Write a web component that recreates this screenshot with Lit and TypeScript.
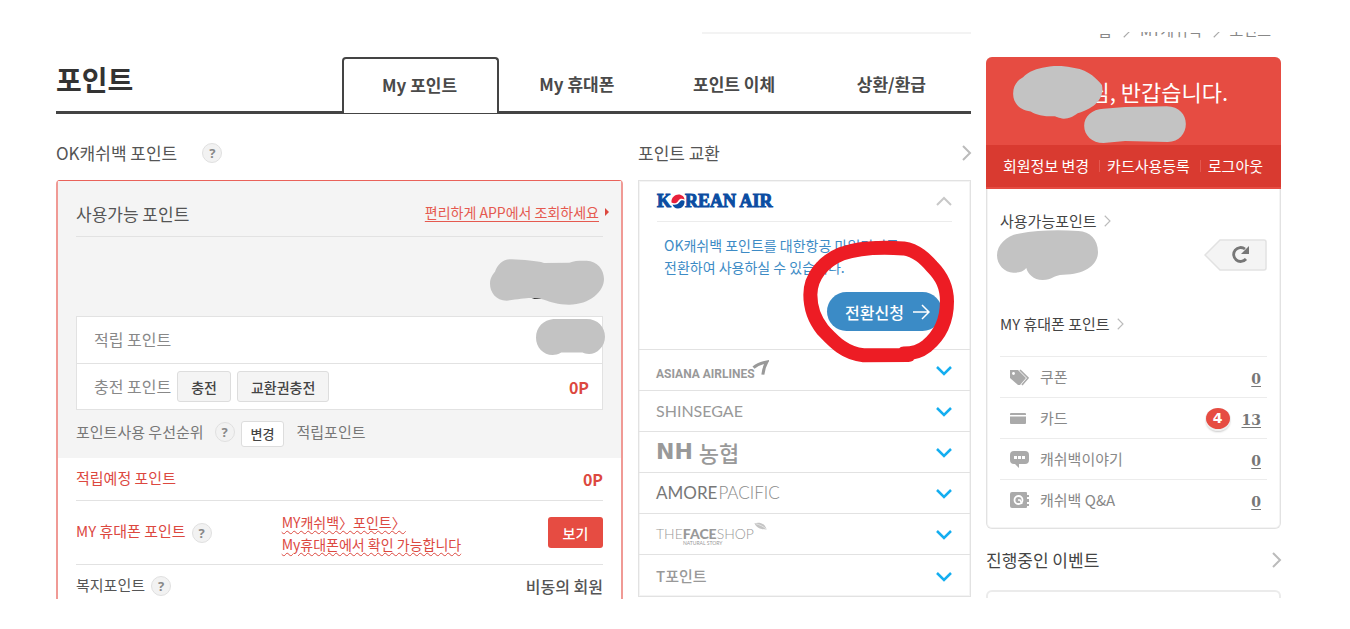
import { LitElement, html, css, svg, nothing } from "lit";
import { customElement } from "lit/decorators.js";

const chevron = (dir: string, size: number, color: string, weight: number) => {
  const d: Record<string, string> = {
    right: "M5 1 L12 8 L5 15",
    up: "M1 12 L8 5 L15 12",
    down: "M1 5 L8 12 L15 5",
  };
  return html`<svg width=${size} height=${size} viewBox="0 0 16 16" fill="none" stroke=${color} stroke-width=${weight} aria-hidden="true"><path d=${d[dir]} /></svg>`;
};

const help = () => html`<button class="help" type="button" aria-label="도움말">?</button>`;

const logos = {
  asiana: html`<span class="asiana">ASIANA AIRLINES</span><svg class="wing" width="17" height="16" viewBox="0 0 50 48" aria-hidden="true"><path d="M4 23 C14 14 26 9 44 6 C38 16 34 28 32 44" fill="none" stroke="#999" stroke-width="9" /></svg>`,
  shinsegae: html`<span class="shinsegae">SHINSEGAE</span>`,
  nh: html`<span class="nh">NH</span><span class="nh-kr">농협</span>`,
  amore: html`<span class="amore"><b>AMORE</b>PACIFIC</span>`,
  face: html`<span class="face">THE<b>FACE</b>SHOP<small>NATURAL STORY</small></span><svg class="leaf" width="13" height="9" viewBox="0 0 36 24" aria-hidden="true"><path d="M1 3 C12 0 28 0 35 20 C20 20 8 18 1 3Z" fill="#c4c4c4" /><path d="M4 4 C16 7 26 12 34 19" stroke="#eee" fill="none" stroke-width="2" /></svg>`,
  tpoint: html`<span class="tpoint">T포인트</span>`,
};

const menuIcons = {
  coupon: svg`<path d="M0 1 H8 L16 9 L10 16 H8 L0 9Z" fill="#aaa"/><circle cx="3.5" cy="4.5" r="1.4" fill="#fff"/><path d="M10 1 L18 9 L12 16" fill="none" stroke="#aaa" stroke-width="1.6"/>`,
  card: svg`<path d="M0 4 Q0 3 1 3 H15 Q16 3 16 4 V5 H0Z M0 6.5 H16 V13 Q16 14 15 14 H1 Q0 14 0 13Z" fill="#aaa"/>`,
  talk: svg`<path d="M4 0 H15 Q19 0 19 4 V9 Q19 13 15 13 H9 V17 L5 13 H4 Q0 13 0 9 V4 Q0 0 4 0Z" fill="#aaa"/><path d="M4 5h3v3H4z M8 5h3v3H8z M12 5h3v3h-3z" fill="#fff"/>`,
  qna: svg`<path d="M2 0 H16 Q17 0 17 1 V3 H19 V5 H17 V7 H19 V10 H17 V12 H19 V14 H17 V15 Q17 16 16 16 H2 Q0 16 0 14 V2 Q0 0 2 0Z" fill="#aaa"/><circle cx="8.500" cy="8" r="4" fill="none" stroke="#fff" stroke-width="1.800"/><path d="M8 8 H10 L12 12" fill="none" stroke="#fff" stroke-width="1.500"/>`,
};

const partners = ["asiana", "shinsegae", "nh", "amore", "face", "tpoint"] as const;

const menu = [
  { icon: "coupon", label: "쿠폰", count: 0, fresh: 0 },
  { icon: "card", label: "카드", count: 13, fresh: 4 },
  { icon: "talk", label: "캐쉬백이야기", count: 0, fresh: 0 },
  { icon: "qna", label: "캐쉬백 Q&A", count: 0, fresh: 0 },
] as const;

@customElement("app-root")
export class AppRoot extends LitElement {
  static styles = css`
    :host {
      display: block;
      background: #fff;
      color: #555;
      font-family: "Noto Sans CJK KR", "Noto Sans", sans-serif;
      font-size: 15px;
      line-height: 20px;
    }
    * { box-sizing: border-box; }
    h1, h2, h3, p, ul { margin: 0; padding: 0; font-size: inherit; font-weight: 400; }
    ul { list-style: none; }
    a { color: inherit; text-decoration: none; }
    button { font-family: inherit; margin: 0; padding: 0; cursor: pointer; }
    svg { display: block; flex: none; }
    .page {
      display: grid;
      grid-template-columns: minmax(0, 1fr) 295px;
      gap: 15px;
      padding: 32px 69px 31px 56px;
      align-items: start;
    }
    .rule { height: 25px; display: flex; justify-content: flex-end; }
    .rule::before { content: ""; width: 269px; height: 2px; background: #f3f3f3; }
    .head {
      display: grid;
      grid-template-columns: 286fr 629fr;
      height: 57px;
      border-bottom: 3px solid #444;
    }
    .title { font-size: 28px; font-weight: 700; line-height: 44px; color: #333; }
    .tabs { display: grid; grid-template-columns: repeat(4, 1fr); }
    .tab {
      display: flex;
      align-items: center;
      justify-content: center;
      font-size: 17px;
      font-weight: 700;
      color: #4a4a4a;
      padding-right: 2px;
    }
    .tab.on {
      border: 2px solid #444;
      border-bottom: 0;
      border-radius: 4px 4px 0 0;
      background: #fff;
      margin-bottom: -2px;
      padding-bottom: 2px;
    }
    .cols { display: grid; grid-template-columns: 567fr 333fr; gap: 15px; align-items: start; }
    .sub {
      display: flex;
      align-items: center;
      height: 66px;
      padding-top: 12px;
      font-size: 17px;
      color: #555;
    }
    .sub .help { margin-left: 25px; }
    .sub .more { margin-left: auto; margin-right: -3px; }
    .help {
      width: 20px;
      height: 20px;
      border: 1px solid #e0e0e0;
      border-radius: 50%;
      background: #f2f2f2;
      color: #888;
      font: 700 13px/18px "Noto Sans", sans-serif;
      text-align: center;
      flex: none;
    }
    .mine {
      border: 2px solid #f09a95;
      border-top: 1px solid #e9625a;
      border-bottom: 0;
      border-radius: 4px 4px 0 0;
    }
    .usable { background: #f4f4f4; padding: 0 18px; }
    .usable-head {
      display: flex;
      align-items: center;
      justify-content: space-between;
      height: 56px;
      padding-top: 10px;
      border-bottom: 1px solid #e2e2e2;
      font-size: 17px;
    }
    .app {
      display: flex;
      align-items: center;
      gap: 6px;
      margin-right: -6px;
      padding-bottom: 4px;
      font-size: 14px;
      color: #e5594f;
    }
    .app span { text-decoration: underline; text-underline-offset: 3px; }
    .total { position: relative; height: 79px; }
    .blob { position: absolute; }
    .blob.sum { right: -1px; top: 22px; }
    .blob.saved { right: -3px; top: 2px; }
    .split { border: 1px solid #e2e2e2; background: #fff; }
    .split-row {
      position: relative;
      display: flex;
      align-items: center;
      gap: 6px;
      height: 46px;
      padding: 0 13px 0 17px;
      font-size: 16px;
      color: #888;
    }
    .split-row + .split-row { border-top: 1px solid #e2e2e2; }
    .split-row > span:first-child { padding-bottom: 2px; }
    .zero { margin-left: auto; color: #dc483f; font-size: 16px; font-weight: 700; }
    .btn {
      height: 31px;
      border: 1px solid #ddd;
      border-radius: 3px;
      background: #f4f4f4;
      color: #444;
      font-size: 14px;
      font-weight: 500;
      line-height: 28px;
      padding: 0 13px;
    }
    .btn.small { background: #fff; height: 26px; font-size: 13px; line-height: 24px; padding: 0 9px; margin: 4px 12px 0 6px; }
    .priority { display: flex; align-items: center; height: 48px; padding-bottom: 4px; color: #777; }
    .priority .help { margin-left: 11px; }
    .extra { padding: 0 18px; }
    .row { display: flex; align-items: center; gap: 6px; border-bottom: 1px solid #e2e2e2; }
    .row.soon { height: 43px; color: #dc483f; }
    .row.soon .label { padding-bottom: 2px; }
    .row.phone { height: 64px; color: #dc483f; }
    .row.phone .label { padding-bottom: 4px; }
    .row.welfare { height: 34px; padding-top: 8px; border: 0; }
    .row.welfare .label { padding-bottom: 2px; }
    .label { flex: none; }
    .note {
      margin-left: 64px;
      font-size: 14px;
      line-height: 22px;
      text-decoration: underline wavy 1px;
      text-underline-offset: 2px;
    }
    .view {
      margin-left: auto;
      width: 55px;
      height: 31px;
      border: 0;
      border-radius: 3px;
      background: #e64c42;
      color: #fff;
      font-size: 14px;
      font-weight: 500;
    }
    .member { margin-left: auto; font-size: 16px; font-weight: 500; }
    .exchange { position: relative; border: 1px solid #e2e2e2; box-shadow: inset 0 0 0 1px #f4f4f4; }
    .open { padding: 0 18px; height: 168px; }
    .open-head {
      display: flex;
      align-items: center;
      justify-content: space-between;
      height: 41px;
      border-bottom: 1px solid #ececec;
    }
    .korean {
      display: flex;
      align-items: center;
      color: #0b4da2;
      font: 700 18px/20px "Liberation Serif", serif;
      -webkit-text-stroke: 1px #0b4da2;
    }
    .open p { padding: 12px 0 14px 7px; font-size: 14px; line-height: 22px; color: #3d8bc5; white-space: nowrap; }
    .apply {
      display: flex;
      align-items: center;
      gap: 9px;
      height: 39px;
      margin-left: auto;
      margin-right: 10px;
      padding: 0 12px 0 18px;
      border: 0;
      border-radius: 20px;
      background: #3b8bc6;
      color: #fff;
      font-size: 16px;
      font-weight: 500;
    }
    .partner {
      display: flex;
      align-items: center;
      width: 100%;
      height: 41px;
      padding: 0 18px 0 17px;
      border: 0;
      border-top: 1px solid #e2e2e2;
      background: none;
      color: #999;
      text-align: left;
    }
    .partner:last-of-type { height: 42px; }
    .partner > svg:last-child { margin-left: auto; }
    .asiana { font: 700 12px/20px Roboto, sans-serif; padding-top: 8px; }
    .wing { margin: 0 0 4px -3px; }
    .shinsegae { font: 400 16px/20px Lato, sans-serif; }
    .nh { font: 700 22px/24px "DejaVu Sans", sans-serif; }
    .nh-kr { font-size: 22px; font-weight: 500; margin-left: 6px; }
    .amore { font: 300 17px/20px Lato, sans-serif; color: #888; }
    .amore b { font-weight: 400; color: #777; margin-right: 1px; }
    .face { position: relative; font: 300 14px/20px Lato, sans-serif; }
    .face b { font-weight: 900; }
    .face small { position: absolute; left: 27px; top: 16px; font: 400 5px/6px Lato, sans-serif; white-space: nowrap; }
    .leaf { margin-bottom: 16px; }
    .tpoint { font-size: 15px; font-weight: 500; }
    .ring { position: absolute; right: 13px; top: 57px; pointer-events: none; }
    .crumbs {
      display: flex;
      align-items: flex-end;
      justify-content: flex-end;
      gap: 8px;
      height: 8px;
      margin-bottom: 17px;
      padding-right: 10px;
      overflow: hidden;
      font-size: 15px;
      line-height: 20px;
      color: #888;
    }
    .crumbs svg { margin-bottom: 2px; }
    .card { border: 1px solid #e2e2e2; border-top: 0; border-radius: 6px; box-shadow: inset 0 0 0 1px #f4f4f4; }
    .greet { position: relative; height: 132px; margin: 0 -1px; border-radius: 6px 6px 0 0; overflow: hidden; background: #e64c42; color: #fff; }
    .greet h2 { height: 88px; padding: 19px 53px 0 0; text-align: right; font-size: 22px; line-height: 30px; }
    .blob.name { left: 27px; top: 9px; }
    .blob.grade { left: 98px; top: 49px; }
    .links { display: flex; align-items: center; justify-content: space-between; height: 42px; padding: 0 18px 0 17px; background: #d93a30; font-size: 15px; }
    .links li + li { display: flex; align-items: center; gap: 7px; }
    .links li + li::before { content: ""; width: 1px; height: 12px; background: #e4584f; }
    .info { padding: 22px 13px 8px; }
    .link { display: flex; align-items: center; gap: 4px; color: #444; }
    .balance { position: relative; display: flex; justify-content: flex-end; height: 83px; padding-top: 8px; }
    .blob.mypoint { left: -3px; top: -1px; }
    .refresh { width: 63px; height: 32px; border: 0; background: none; }
    .menu { margin-top: 22px; }
    .item { display: flex; align-items: center; height: 41px; padding: 0 6px 0 10px; border-top: 1px solid #ececec; color: #888; }
    .item .name { flex: 1; margin-left: 11px; }
    .count { font: 700 14px/20px "DejaVu Serif", serif; color: #777; text-decoration: underline; text-underline-offset: 2px; padding-top: 4px; }
    .fresh {
      width: 24px;
      height: 21px;
      margin-right: 12px;
      border-radius: 50%;
      background: #e64c42;
      box-shadow: 0 1px 0 1px #eee, 0 3px 2px #ccc;
      color: #fff;
      font: 700 14px/20px "DejaVu Sans", sans-serif;
      text-align: center;
    }
    .events { display: flex; align-items: center; justify-content: space-between; height: 61px; margin-right: -3px; font-size: 17px; color: #444; }
    .event-card { height: 8px; border: 2px solid #ebebeb; border-bottom: 0; border-radius: 6px 6px 0 0; }
  `;

  render() {
    return html`
      <div class="page">
        <main>
          <div class="rule"></div>
          <header class="head">
            <h1 class="title">포인트</h1>
            <nav class="tabs">
              <a class="tab on" href="#my">My 포인트</a>
              <a class="tab" href="#phone">My 휴대폰</a>
              <a class="tab" href="#transfer">포인트 이체</a>
              <a class="tab" href="#refund">상환/환급</a>
            </nav>
          </header>
          <div class="cols">${this.myPoints()}${this.exchange()}</div>
        </main>
        ${this.side()}
      </div>
    `;
  }

  private myPoints() {
    return html`
      <section>
        <h2 class="sub">OK캐쉬백 포인트 ${help()}</h2>
        <div class="mine">
          <div class="usable">
            <div class="usable-head">
              <h3>사용가능 포인트</h3>
              <a class="app" href="#app"><span>편리하게 APP에서 조회하세요</span><svg width="4" height="8" viewBox="0 0 4 8" aria-hidden="true"><path d="M0 0 L4 4 L0 8Z" fill="#dc483f" /></svg></a>
            </div>
            <div class="total">
              <svg class="blob sum" width="114" height="46" viewBox="450 268 342 138" aria-hidden="true">
                <path d="M575 388 Q592 380 608 388Z" fill="#333" />
                <path d="M515 269 C550 271 590 273 612 280 L688 279 C705 272 722 273 740 273 C772 274 792 300 792 328 C792 365 750 405 687 405 C655 405 630 396 612 390 C570 380 550 388 500 393 C468 392 450 368 450 342 C450 325 458 314 465 306 C472 285 490 267 515 269Z" fill="#c3c3c3" />
              </svg>
            </div>
            <div class="split">
              <div class="split-row">
                <span>적립 포인트</span>
                <svg class="blob saved" width="69" height="36" viewBox="588 447 208 108" aria-hidden="true"><path d="M640 447 L740 447 C775 447 796 472 796 500 C796 530 772 552 748 552 C738 552 733 550 728 548 L664 548 C655 554 645 555 638 555 C610 555 588 532 588 503 C588 470 612 450 640 447Z" fill="#c3c3c3" /></svg>
              </div>
              <div class="split-row">
                <span>충전 포인트</span>
                <button class="btn" type="button">충전</button>
                <button class="btn" type="button">교환권충전</button>
                <span class="zero">0P</span>
              </div>
            </div>
            <div class="priority">
              <span>포인트사용 우선순위</span>${help()}
              <button class="btn small" type="button">변경</button>
              <span>적립포인트</span>
            </div>
          </div>
          <div class="extra">
            <div class="row soon"><span class="label">적립예정 포인트</span><span class="zero">0P</span></div>
            <div class="row phone">
              <span class="label">MY 휴대폰 포인트</span>${help()}
              <p class="note">MY캐쉬백〉포인트〉<br />My휴대폰에서 확인 가능합니다</p>
              <button class="view" type="button">보기</button>
            </div>
            <div class="row welfare"><span class="label">복지포인트</span>${help()}<span class="member">비동의 회원</span></div>
          </div>
        </div>
      </section>
    `;
  }

  private exchange() {
    return html`
      <section>
        <h2 class="sub">포인트 교환 <a class="more" href="#exchange" aria-label="더보기">${chevron("right", 16, "#bbb", 2)}</a></h2>
        <div class="exchange">
          <div class="open">
            <div class="open-head">
              <span class="korean">K<svg width="14" height="15" viewBox="0 0 28 30" stroke="none" aria-hidden="true"><path d="M1 17 C0 7 8 1 15 1 C22 1 27 6 27 11 C22 8 17 9 15 13 C12 19 5 20 1 17Z" fill="#e8203a" /><path d="M3 21 C9 23 15 20 18 15 C20 12 24 12 27 14 C28 22 22 29 14 29 C8 29 4 25 3 21Z" fill="#0b4da2" /></svg>REAN AIR</span>
              ${chevron("up", 16, "#c8c8c8", 2)}
            </div>
            <p>OK캐쉬백 포인트를 대한항공 마일리지로<br />전환하여 사용하실 수 있습니다.</p>
            <button class="apply" type="button">전환신청<svg width="17" height="16" viewBox="0 0 17 16" fill="none" stroke="#fff" stroke-width="1.500" aria-hidden="true"><path d="M0 8 H16 M9 1 L16 8 L9 15" /></svg></button>
          </div>
          ${partners.map(
            (p) => html`<button class="partner" type="button">${logos[p]}${chevron("down", 16, "#14aef0", 2.5)}</button>`
          )}
          <svg class="ring" width="157" height="127" viewBox="510 205 470 380" aria-hidden="true">
            <path d="M541 375 C541 320 580 274 635 252 C690 232 760 232 820 236 C860 242 885 268 905 290 C935 320 950 350 950 395 C950 450 930 495 890 528 C868 545 850 551 820 551 L835 555 L700 556 C640 550 607 510 578 480 C550 445 541 410 541 375Z" fill="none" stroke="#ed1c24" stroke-width="42" stroke-linejoin="round" />
          </svg>
        </div>
      </section>
    `;
  }

  private side() {
    return html`
      <aside>
        <nav class="crumbs">
          <a href="#home">홈</a>${chevron("right", 12, "#aaa", 1.5)}<a href="#mypage">MY캐쉬백</a>${chevron("right", 12, "#aaa", 1.5)}<a href="#point">포인트</a>
        </nav>
        <div class="card">
          <div class="greet">
            <h2>님, 반갑습니다.</h2>
            <svg class="blob name" width="90" height="53" viewBox="115 138 271 160" aria-hidden="true"><path d="M115 222 C115 195 130 180 145 172 C160 155 190 145 212 142 C240 135 270 137 300 144 C345 150 370 180 383 195 C390 225 375 262 310 281 C295 292 285 297 268 297 C252 296 245 290 238 290 C205 290 185 285 168 275 C135 272 115 250 115 222Z" fill="#c3c3c3" /></svg>
            <svg class="blob grade" width="102" height="37" viewBox="327 258 305 111" aria-hidden="true"><path d="M385 266 L450 261 L575 259 C612 259 632 285 632 312 C632 340 612 366 578 366 L450 363 L385 369 C350 369 327 345 327 317 C327 290 350 267 385 266Z" fill="#c3c3c3" /></svg>
            <ul class="links">
              <li><a href="#profile">회원정보 변경</a></li>
              <li><a href="#card">카드사용등록</a></li>
              <li><a href="#logout">로그아웃</a></li>
            </ul>
          </div>
          <div class="info">
            <a class="link" href="#usable">사용가능포인트 ${chevron("right", 12, "#bbb", 1.5)}</a>
            <div class="balance">
              <svg class="blob mypoint" width="101" height="50" viewBox="66 121 303 150" aria-hidden="true"><path d="M130 132 C190 121 250 120 310 124 C345 125 369 150 369 187 C369 225 330 255 265 255 C235 256 232 271 203 271 C175 271 158 252 154 235 C145 247 130 249 115 249 C88 249 66 225 66 197 C66 165 95 138 130 132Z" fill="#c3c3c3" /></svg>
              <button class="refresh" type="button" aria-label="새로고침">
                <svg width="63" height="32" viewBox="0 0 63 32" aria-hidden="true">
                  <path d="M1 16 L16 1 H60 Q62 1 62 3 V29 Q62 31 60 31 H16Z" fill="#f4f4f4" stroke="#e2e2e2" stroke-width="1.500" />
                  <path d="M42 20 A7 7 0 1 1 41 10" fill="none" stroke="#777" stroke-width="2.800" />
                  <path d="M45 7 V15 H37Z" fill="#777" />
                </svg>
              </button>
            </div>
            <a class="link" href="#phone">MY 휴대폰 포인트 ${chevron("right", 12, "#bbb", 1.5)}</a>
            <ul class="menu">
              ${menu.map(
                (m) => html`<li class="item">
                  <svg width="19" height="17" viewBox="0 0 19 17" aria-hidden="true">${menuIcons[m.icon]}</svg>
                  <span class="name">${m.label}</span>
                  ${m.fresh ? html`<span class="fresh">${m.fresh}</span>` : nothing}
                  <a class="count" href="#${m.icon}">${m.count}</a>
                </li>`
              )}
            </ul>
          </div>
        </div>
        <h2 class="events">진행중인 이벤트 <a href="#events" aria-label="더보기">${chevron("right", 16, "#bbb", 2)}</a></h2>
        <div class="event-card"></div>
      </aside>
    `;
  }
}
